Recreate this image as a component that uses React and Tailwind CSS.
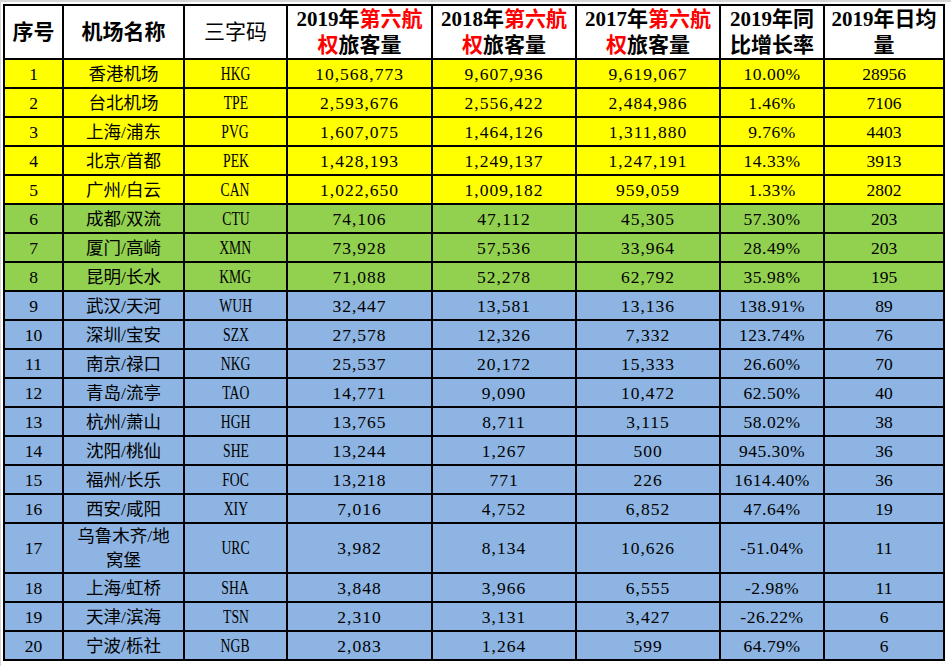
const rows = [
  [1, "香港机场", "HKG", "10,568,773", "9,607,936", "9,619,067", "10.00%", "28956"],
  [2, "台北机场", "TPE", "2,593,676", "2,556,422", "2,484,986", "1.46%", "7106"],
  [3, "上海/浦东", "PVG", "1,607,075", "1,464,126", "1,311,880", "9.76%", "4403"],
  [4, "北京/首都", "PEK", "1,428,193", "1,249,137", "1,247,191", "14.33%", "3913"],
  [5, "广州/白云", "CAN", "1,022,650", "1,009,182", "959,059", "1.33%", "2802"],
  [6, "成都/双流", "CTU", "74,106", "47,112", "45,305", "57.30%", "203"],
  [7, "厦门/高崎", "XMN", "73,928", "57,536", "33,964", "28.49%", "203"],
  [8, "昆明/长水", "KMG", "71,088", "52,278", "62,792", "35.98%", "195"],
  [9, "武汉/天河", "WUH", "32,447", "13,581", "13,136", "138.91%", "89"],
  [10, "深圳/宝安", "SZX", "27,578", "12,326", "7,332", "123.74%", "76"],
  [11, "南京/禄口", "NKG", "25,537", "20,172", "15,333", "26.60%", "70"],
  [12, "青岛/流亭", "TAO", "14,771", "9,090", "10,472", "62.50%", "40"],
  [13, "杭州/萧山", "HGH", "13,765", "8,711", "3,115", "58.02%", "38"],
  [14, "沈阳/桃仙", "SHE", "13,244", "1,267", "500", "945.30%", "36"],
  [15, "福州/长乐", "FOC", "13,218", "771", "226", "1614.40%", "36"],
  [16, "西安/咸阳", "XIY", "7,016", "4,752", "6,852", "47.64%", "19"],
  [17, "乌鲁木齐/地|窝堡", "URC", "3,982", "8,134", "10,626", "-51.04%", "11"],
  [18, "上海/虹桥", "SHA", "3,848", "3,966", "6,555", "-2.98%", "11"],
  [19, "天津/滨海", "TSN", "2,310", "3,131", "3,427", "-26.22%", "6"],
  [20, "宁波/栎社", "NGB", "2,083", "1,264", "599", "64.79%", "6"],
];

const rowBg = (n) => {
  if (n <= 5) return "bg-[#ffff00]";
  if (n <= 8) return "bg-[#92d050]";
  return "bg-[#8db4e2]";
};

const Red = ({ children }) => <span className="text-[#ff0000]">{children}</span>;

const th = "border-2 border-black p-0 text-center align-middle leading-[26px] font-bold";
const td = "border-2 border-black p-0 text-center align-middle";

const PaxHead = ({ year }) => (
  <th className={th}>
    {year}年<Red>第六航</Red>
    <br />
    <Red>权</Red>旅客量
  </th>
);

export default function App() {
  return (
    <div className="w-[951px] h-[666px] bg-white border-t-2 border-l border-[#d6d6d6] overflow-hidden">
      <table
        className="table-fixed border-collapse w-[940px] ml-[2px] mt-[2px] text-black"
        style={{ fontFamily: '"Liberation Serif", "Noto Sans CJK SC", serif' }}
      >
        <colgroup>
          <col className="w-[59px]" />
          <col className="w-[121px]" />
          <col className="w-[103px]" />
          <col className="w-[145px]" />
          <col className="w-[144px]" />
          <col className="w-[144px]" />
          <col className="w-[104px]" />
          <col className="w-[120px]" />
        </colgroup>
        <thead>
          <tr className="h-[52px] bg-white text-[21px]">
            <th className={th}>序号</th>
            <th className={th}>机场名称</th>
            <th className={th + " !font-normal"}>三字码</th>
            <PaxHead year="2019" />
            <PaxHead year="2018" />
            <PaxHead year="2017" />
            <th className={th}>
              2019年同
              <br />
              比增长率
            </th>
            <th className={th}>
              2019年日均
              <br />
              量
            </th>
          </tr>
        </thead>
        <tbody className="text-[17.5px] leading-[22px]">
          {rows.map((r) => {
            const name = r[1].split("|");
            const tall = name.length > 1;
            return (
              <tr key={r[0]} className={(tall ? "h-[48px] " : "h-[29px] ") + rowBg(r[0])}>
                <td className={td}>{r[0]}</td>
                <td className={td + " leading-[24px]"}>
                  {name[0]}
                  {tall && (
                    <>
                      <br />
                      {name[1]}
                    </>
                  )}
                </td>
                <td className={td}>
                  <span className="inline-block scale-x-[0.72] text-[19px] leading-[22px]">{r[2]}</span>
                </td>
                <td className={td + " tracking-[1px]"}>{r[3]}</td>
                <td className={td + " tracking-[1px]"}>{r[4]}</td>
                <td className={td + " tracking-[1px]"}>{r[5]}</td>
                <td className={td + " tracking-[0.5px]"}>{r[6]}</td>
                <td className={td}>{r[7]}</td>
              </tr>
            );
          })}
        </tbody>
      </table>
    </div>
  );
}
